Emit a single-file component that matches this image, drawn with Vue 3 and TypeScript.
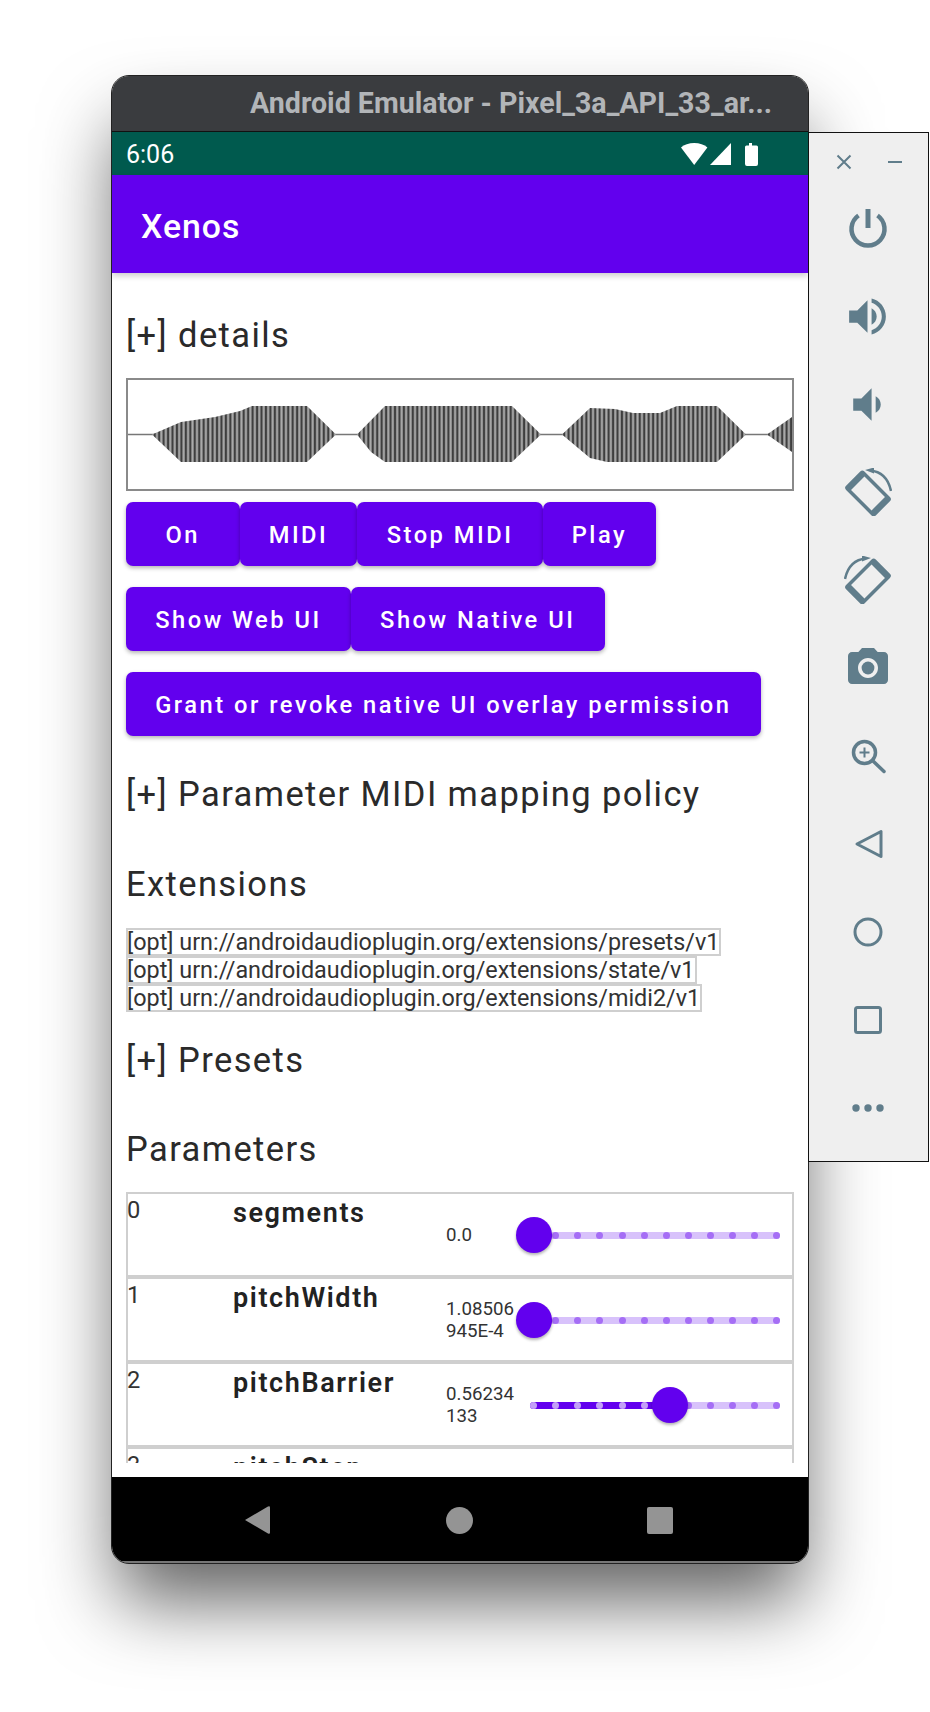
<template>
  <div class="desk">
    <div class="emulator">
      <div class="title-bar">Android Emulator - Pixel_3a_API_33_ar...</div>
      <div class="status-bar">
        <span class="clock">6:06</span>
        <svg class="status-icons" width="78" height="24" viewBox="0 0 78 24">
          <path d="M0 5.500C3 2.500 8 1 13.200 1s10.200 1.500 13.200 4.500L13.200 23z" fill="#fff" />
          <path d="M29 23L50 1v22z" fill="#fff" />
          <path d="M64 5q0-1.500 1.500-1.500H68V1h3v2.500h4.500q1.500 0 1.500 1.500v17q0 2-2 2H66q-2 0-2-2z" fill="#fff" />
        </svg>
      </div>
      <div class="app-bar">Xenos</div>

      <div class="page">
        <div class="scroll">
          <h2 class="heading first">[+] details</h2>
          <div class="waveform">
            <svg width="664" height="109" viewBox="128 380 664 109">
              <defs>
                <linearGradient id="stripe-fill">
                  <stop offset="0" stop-color="#181818" />
                  <stop offset="0.3" stop-color="#8c8c8c" />
                  <stop offset="0.5" stop-color="#acacac" />
                  <stop offset="0.7" stop-color="#8c8c8c" />
                  <stop offset="1" stop-color="#181818" />
                </linearGradient>
                <pattern id="stripes" patternUnits="userSpaceOnUse" x="128" y="0" width="4.45" height="120">
                  <rect width="4.45" height="120" fill="url(#stripe-fill)" />
                </pattern>
              </defs>
              <line x1="128" y1="434.500" x2="792" y2="434.500" stroke="#777" stroke-width="1.500" />
              <polygon v-for="(points, i) in envelopes" :key="i" :points="points" fill="url(#stripes)" />
            </svg>
          </div>

          <div class="button-row">
            <button v-for="label in transportButtons" :key="label">{{ label }}</button>
          </div>
          <div class="button-row">
            <button v-for="label in uiButtons" :key="label">{{ label }}</button>
          </div>
          <div class="button-row">
            <button>Grant or revoke native UI overlay permission</button>
          </div>

          <h2 class="heading policy">[+] Parameter MIDI mapping policy</h2>
          <h2 class="heading extensions">Extensions</h2>
          <div class="extension-list">
            <div v-for="ext in extensions" :key="ext" class="extension">[opt] {{ ext }}</div>
          </div>
          <h2 class="heading presets">[+] Presets</h2>
          <h2 class="heading parameters">Parameters</h2>

          <div class="param-table">
            <div v-for="p in params" :key="p.id" class="param-row">
              <div class="param-id">{{ p.id }}</div>
              <div class="param-name">{{ p.name }}</div>
              <div class="param-value">{{ p.value }}</div>
              <div class="slider">
                <div class="track"></div>
                <div class="track-active" :style="{ width: `${thumbX(p.ratio) + 4}px` }"></div>
                <span
                  v-for="n in 12"
                  :key="n"
                  class="tick"
                  :class="{ on: thumbX(p.ratio) > tickX(n) }"
                  :style="{ left: `${tickX(n) - 3.5}px` }"
                ></span>
                <span class="thumb" :style="{ left: `${thumbX(p.ratio) - 18}px` }"></span>
              </div>
            </div>
          </div>
        </div>
      </div>

      <div class="nav-bar">
        <svg width="25" height="28" viewBox="0 0 25 28"><path d="M0 14L23 .5q2-1 2 1v25q0 2-2 1z" fill="#949494" /></svg>
        <span class="nav-home"></span>
        <span class="nav-recent"></span>
      </div>
    </div>

    <div class="toolbar">
      <div class="window-controls">
        <svg width="16" height="16" viewBox="0 0 16 16"><path d="M1.500 1.500l13 13M14.500 1.500l-13 13" stroke="#607d8b" stroke-width="2" /></svg>
        <svg width="16" height="16" viewBox="0 0 16 16"><path d="M1 8h14" stroke="#607d8b" stroke-width="2" /></svg>
      </div>
      <div class="tool">
        <svg width="48" height="48" viewBox="0 0 48 48">
          <path d="M24 5v19" stroke="#607d8b" stroke-width="5" />
          <path d="M14.500 11.500a16.500 16.500 0 1 0 19 0" fill="none" stroke="#607d8b" stroke-width="4.500" />
        </svg>
      </div>
      <div class="tool">
        <svg width="49" height="49" viewBox="0 0 24 24"><path d="M3 9v6h4l5 5V4L7 9H3zm13.500 3c0-1.770-1.020-3.290-2.500-4.030v8.050c1.480-.73 2.500-2.250 2.500-4.020zM14 3.230v2.060c2.890.86 5 3.540 5 6.710s-2.110 5.850-5 6.710v2.060c4.010-.91 7-4.490 7-8.770s-2.990-7.860-7-8.770z" fill="#607d8b" /></svg>
      </div>
      <div class="tool">
        <svg width="49" height="49" viewBox="0 0 24 24"><path d="M18.500 12c0-1.770-1.020-3.290-2.500-4.030v8.050c1.480-.73 2.500-2.250 2.500-4.020zM5 9v6h4l5 5V4L9 9H5z" fill="#607d8b" /></svg>
      </div>
      <div class="tool">
        <svg width="48" height="48" viewBox="0 0 48 48">
          <g transform="rotate(-45 24 25.500)">
            <path fill-rule="evenodd" d="M14 4.500h20q3 0 3 3v36q0 3-3 3H14q-3 0-3-3v-36q0-3 3-3zM14.500 11v29h19V11z" fill="#607d8b" />
          </g>
          <path d="M26 2.500Q43 4 47 23" fill="none" stroke="#607d8b" stroke-width="2.500" />
          <path d="M21 2l9-2.500v6z" fill="#607d8b" />
        </svg>
      </div>
      <div class="tool">
        <svg width="48" height="48" viewBox="0 0 48 48">
          <g transform="translate(48 0) scale(-1 1)">
            <g transform="rotate(-45 24 25.500)">
              <path fill-rule="evenodd" d="M14 4.500h20q3 0 3 3v36q0 3-3 3H14q-3 0-3-3v-36q0-3 3-3zM14.500 11v29h19V11z" fill="#607d8b" />
            </g>
            <path d="M26 2.500Q43 4 47 23" fill="none" stroke="#607d8b" stroke-width="2.500" />
            <path d="M21 2l9-2.500v6z" fill="#607d8b" />
          </g>
        </svg>
      </div>
      <div class="tool">
        <svg width="48" height="48" viewBox="0 0 24 24">
          <path d="M9 2L7.170 4H4c-1.100 0-2 .9-2 2v12c0 1.100.9 2 2 2h16c1.100 0 2-.9 2-2V6c0-1.100-.9-2-2-2h-3.170L15 2H9zm3 15c-2.760 0-5-2.240-5-5s2.240-5 5-5 5 2.240 5 5-2.240 5-5 5z" fill="#607d8b" />
          <circle cx="12" cy="12" r="3.200" fill="#607d8b" />
        </svg>
      </div>
      <div class="tool">
        <svg width="48" height="48" viewBox="0 0 48 48">
          <circle cx="20.500" cy="20.500" r="11" fill="none" stroke="#607d8b" stroke-width="3.500" />
          <path d="M28.500 28.500L40 39.500" stroke="#607d8b" stroke-width="3.500" stroke-linecap="round" />
          <path d="M20.500 15.500v10M15.500 20.500h10" stroke="#607d8b" stroke-width="2" />
        </svg>
      </div>
      <div class="tool">
        <svg width="48" height="48" viewBox="0 0 48 48"><path d="M13 24L37 11.500v25z" fill="none" stroke="#607d8b" stroke-width="3" stroke-linejoin="round" /></svg>
      </div>
      <div class="tool">
        <svg width="48" height="48" viewBox="0 0 48 48"><circle cx="24" cy="24" r="13" fill="none" stroke="#607d8b" stroke-width="3" /></svg>
      </div>
      <div class="tool">
        <svg width="48" height="48" viewBox="0 0 48 48"><rect x="11.500" y="11.500" width="25" height="25" rx="2" fill="none" stroke="#607d8b" stroke-width="3" /></svg>
      </div>
      <div class="tool">
        <svg width="48" height="48" viewBox="0 0 48 48">
          <circle cx="12" cy="24" r="3.700" fill="#607d8b" />
          <circle cx="24" cy="24" r="3.700" fill="#607d8b" />
          <circle cx="36" cy="24" r="3.700" fill="#607d8b" />
        </svg>
      </div>
    </div>
  </div>
</template>

<script setup lang="ts">
interface Param {
  id: number
  name: string
  value: string
  ratio: number
}

const transportButtons = ['On', 'MIDI', 'Stop MIDI', 'Play']
const uiButtons = ['Show Web UI', 'Show Native UI']

const extensions = [
  'urn://androidaudioplugin.org/extensions/presets/v1',
  'urn://androidaudioplugin.org/extensions/state/v1',
  'urn://androidaudioplugin.org/extensions/midi2/v1'
]

const params: Param[] = [
  { id: 0, name: 'segments', value: '0.0', ratio: 0 },
  { id: 1, name: 'pitchWidth', value: '1.08506945E-4', ratio: 0.0001 },
  { id: 2, name: 'pitchBarrier', value: '0.56234133', ratio: 0.5623 },
  { id: 3, name: 'pitchStep', value: '0.0', ratio: 0 }
]

// outline of each note, read off the reference in page coordinates
const envelopes = [
  '152,434.500 181,422 215,417 240,411 252,406 307,406 336,434.500 307,462 181,462',
  '357,434.500 385,406 512,406 541,434.500 512,462 385,462 371,452',
  '562,434.500 590,408 615,409 633,413 660,413 677,406 717,406 746,434.500 717,462 607,462 590,458',
  '767,434.500 792,417 792,452'
]

// slider geometry relative to the .slider cell
const tickX = (n: number) => 17.7 + (n - 1) * 22.09
const thumbX = (ratio: number) => 17.7 + ratio * 243
</script>

<style>
html,
body {
  margin: 0;
  background: #fff;
}
</style>

<style scoped>
.desk {
  position: relative;
  width: 930px;
  height: 1712px;
  overflow: hidden;
  background: #fff;
  font-family: Roboto, 'Noto Sans', sans-serif;
}

.emulator {
  position: absolute;
  left: 112px;
  top: 76px;
  width: 696px;
  height: 1487px;
  display: flex;
  flex-direction: column;
  overflow: hidden;
  border-radius: 17px;
  background: #fff;
  outline: 1px solid #222;
}

.desk::before {
  content: '';
  position: absolute;
  left: 112px;
  top: 76px;
  width: 696px;
  height: 1487px;
  border-radius: 17px;
  box-shadow: 0 44px 76px -6px rgba(0, 0, 0, 0.62);
}

.title-bar {
  height: 56px;
  flex: none;
  box-sizing: border-box;
  padding-left: 138px;
  border-bottom: 1px solid #111;
  background: #3a3c3f;
  color: #b2b5b8;
  font-size: 28.600px;
  font-weight: 700;
  line-height: 54px;
  white-space: nowrap;
}

.status-bar {
  height: 43px;
  flex: none;
  display: flex;
  align-items: center;
  justify-content: space-between;
  padding: 0 49px 0 14px;
  background: #005a4e;
  color: #fff;
}

.clock {
  padding-top: 2px;
  font-size: 25px;
}

.status-icons {
  display: block;
}

.app-bar {
  height: 98px;
  flex: none;
  position: relative;
  z-index: 1;
  padding-left: 29px;
  background: #6200ee;
  box-shadow: 0 3px 6px rgba(0, 0, 0, 0.2);
  color: #fff;
  font-size: 33.800px;
  font-weight: 500;
  letter-spacing: 1px;
  line-height: 103px;
}

.page {
  flex: 1;
  min-height: 0;
  padding-bottom: 14px;
  background: #fff;
}

.scroll {
  height: 100%;
  overflow: hidden;
  padding-left: 14px;
}

.heading {
  margin: 0;
  color: #2a2a2a;
  font-size: 34.500px;
  font-weight: 400;
  letter-spacing: 1.400px;
  line-height: 48px;
}

.heading.first {
  margin-top: 38px;
  margin-bottom: 19px;
}

.heading.policy {
  margin-top: 34px;
}

.heading.extensions {
  margin-top: 42px;
  margin-bottom: 20px;
}

.heading.presets {
  margin-top: 24px;
}

.heading.parameters {
  margin-top: 41px;
  margin-bottom: 19px;
}

.waveform {
  box-sizing: border-box;
  width: 668px;
  height: 113px;
  border: 2px solid #8a8a8a;
}

.waveform svg {
  display: block;
}

.button-row {
  display: flex;
  margin-bottom: 21px;
}

.waveform + .button-row {
  margin-top: 11px;
}

.button-row button {
  min-width: 113.500px;
  height: 64px;
  padding: 2px 29.200px 0;
  border: 0;
  border-radius: 7px;
  background: #6200ee;
  box-shadow: 0 2px 4px rgba(0, 0, 0, 0.3);
  color: #fff;
  font-family: inherit;
  font-size: 23.700px;
  font-weight: 500;
  letter-spacing: 2.500px;
}

.button-row:last-of-type {
  margin-bottom: 0;
}

.extension {
  box-sizing: border-box;
  width: fit-content;
  height: 28px;
  border: 2px solid #cfcfcf;
  color: #333;
  font-size: 23.380px;
  line-height: 24px;
  text-indent: -1px;
  white-space: nowrap;
}

.param-table {
  width: 668px;
}

.param-row {
  box-sizing: border-box;
  height: 85px;
  display: grid;
  grid-template-columns: 105px 213px 70px 1fr;
  border: 2px solid #cfcfcf;
  color: #222;
}

.param-id {
  margin-left: -1px;
  color: #333;
  font-size: 23.700px;
  line-height: 32px;
}

.param-name {
  font-size: 27px;
  font-weight: 600;
  letter-spacing: 1.600px;
  line-height: 38px;
}

.param-value {
  align-self: center;
  color: #333;
  font-size: 18.700px;
  line-height: 22px;
  word-break: break-all;
}

.slider {
  position: relative;
}

.track,
.track-active {
  position: absolute;
  left: 14px;
  top: 37.500px;
  height: 7px;
  border-radius: 4px;
}

.track {
  right: 12px;
  background: #d8c2fb;
}

.track-active {
  background: #6200ee;
}

.tick {
  position: absolute;
  top: 37.500px;
  width: 7px;
  height: 7px;
  border-radius: 50%;
  background: #a56ef5;
}

.tick.on {
  background: #c3a0f8;
}

.thumb {
  position: absolute;
  top: 23px;
  width: 36px;
  height: 36px;
  border-radius: 50%;
  background: #6200ee;
  box-shadow: 0 2px 3px rgba(0, 0, 0, 0.3);
}

.nav-bar {
  height: 86px;
  flex: none;
  position: relative;
  display: flex;
  align-items: center;
  padding: 0 135px 0 133px;
  justify-content: space-between;
  background: #000;
  box-shadow: inset 0 -2px 0 #777;
}

.nav-home {
  width: 27px;
  height: 27px;
  margin-left: 2px;
  border-radius: 50%;
  background: #949494;
}

.nav-recent {
  width: 26px;
  height: 27px;
  border-radius: 2px;
  background: #949494;
}

.toolbar {
  position: absolute;
  left: 808px;
  top: 132px;
  width: 121px;
  height: 1030px;
  box-sizing: border-box;
  padding-right: 2px;
  border: 1px solid #111;
  background: #efefef;
}

.window-controls {
  height: 51px;
  box-sizing: border-box;
  display: flex;
  justify-content: space-between;
  padding: 21px 23px 0 27px;
}

.tool {
  height: 88px;
  display: flex;
  align-items: center;
  justify-content: center;
}
</style>
